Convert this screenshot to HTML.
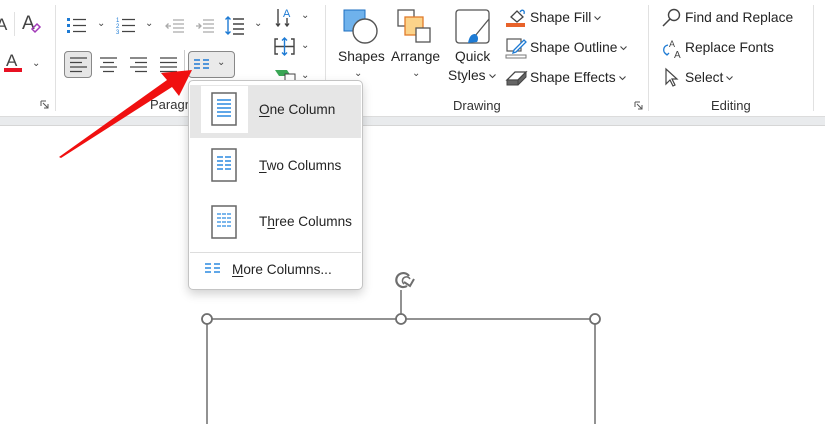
<!DOCTYPE html>
<html><head><meta charset="utf-8">
<style>
*{margin:0;padding:0;box-sizing:border-box}
body{width:825px;height:424px;overflow:hidden;background:#fff;position:relative;font-family:"Liberation Sans",sans-serif;color:#242424;font-size:14px}
.a{position:absolute;white-space:nowrap}
.sep{position:absolute;width:1px;background:#e1e1e1}
.lbl{position:absolute;font-size:13px;color:#333}
.chev{position:absolute;font-size:10px;color:#444}
svg{position:absolute;overflow:visible}
svg.cv{position:static;display:inline-block;vertical-align:middle;margin-left:3px}
.u{text-decoration:underline;text-underline-offset:2px}
.dd{font-size:13.6px}
</style></head><body>

<!-- ribbon -->
<div class="sep" style="left:55px;top:5px;height:106px"></div>
<div class="sep" style="left:325px;top:5px;height:106px"></div>
<div class="sep" style="left:648px;top:5px;height:106px"></div>
<div class="sep" style="left:813px;top:5px;height:106px"></div>
<div class="sep" style="left:14px;top:12px;height:24px"></div>

<!-- left partial -->
<div class="a" style="left:-4px;top:15px;font-size:17px;color:#444">A</div>
<div class="a" style="left:22px;top:13px;font-size:19px;color:#444">A</div>
<svg style="left:30px;top:22px" width="12" height="12"><path d="M2 7 L7 2 L10 5 L5 10Z" fill="none" stroke="#a23ab8" stroke-width="1.5"/></svg>
<div class="a" style="left:6px;top:51px;font-size:17px;color:#444">A</div>
<div class="a" style="left:4px;top:68px;width:18px;height:4px;background:#e81123"></div>
<div class="chev" style="left:32px;top:58px">⌄</div>
<svg style="left:40px;top:100px" width="10" height="10"><path d="M1 1H6M1 1V6M3 3L8 8M8 4V8H4" fill="none" stroke="#555"/></svg>

<!-- paragraph row1 -->
<svg style="left:67px;top:17px" width="20" height="18"><g fill="#1e7bd4"><rect x="0" y="1" width="3" height="3"/><rect x="0" y="7" width="3" height="3"/><rect x="0" y="13" width="3" height="3"/></g><g stroke="#444" stroke-width="1.3"><path d="M6 2.5H19M6 8.5H19M6 14.5H19"/></g></svg>
<div class="chev" style="left:97px;top:18px">⌄</div>
<svg style="left:116px;top:17px" width="20" height="18"><g fill="#1e7bd4" font-size="6" font-family="Liberation Sans"><text x="0" y="5">1</text><text x="0" y="11">2</text><text x="0" y="17">3</text></g><g stroke="#444" stroke-width="1.3"><path d="M6 2.5H19M6 8.5H19M6 14.5H19"/></g></svg>
<div class="chev" style="left:145px;top:18px">⌄</div>
<svg style="left:165px;top:18px" width="20" height="16"><g stroke="#aaa" stroke-width="1.3" fill="none"><path d="M8 2H19M8 6H19M8 10H19M8 14H19M6 8H1M3.5 5.5L1 8L3.5 10.5"/></g></svg>
<svg style="left:195px;top:18px" width="20" height="16"><g stroke="#aaa" stroke-width="1.3" fill="none"><path d="M8 2H19M8 6H19M8 10H19M8 14H19M1 8H6M3.5 5.5L6 8L3.5 10.5"/></g></svg>
<svg style="left:225px;top:15px" width="20" height="22"><g stroke="#1e7bd4" stroke-width="1.4" fill="none"><path d="M3 2V19M0.5 4.5L3 2L5.5 4.5M0.5 16.5L3 19L5.5 16.5"/></g><g stroke="#444" stroke-width="1.4"><path d="M8 4H19M8 9H19M8 14H19M8 19H19"/></g></svg>
<div class="chev" style="left:254px;top:18px">⌄</div>

<!-- row2 -->
<div class="a" style="left:64px;top:51px;width:28px;height:27px;border:1px solid #888;border-radius:4px;background:#e6e6e6"></div>
<svg style="left:70px;top:57px" width="18" height="16"><g stroke="#444" stroke-width="1.3"><path d="M0 1H17M0 5.5H12M0 10H17M0 14.5H12"/></g></svg>
<svg style="left:100px;top:57px" width="18" height="16"><g stroke="#444" stroke-width="1.3"><path d="M0 1H17M3 5.5H14M0 10H17M3 14.5H14"/></g></svg>
<svg style="left:130px;top:57px" width="18" height="16"><g stroke="#444" stroke-width="1.3"><path d="M0 1H17M5 5.5H17M0 10H17M5 14.5H17"/></g></svg>
<svg style="left:160px;top:57px" width="18" height="16"><g stroke="#444" stroke-width="1.3"><path d="M0 1H17M0 5.5H17M0 10H17M0 14.5H17"/></g></svg>
<div class="sep" style="left:184px;top:50px;height:28px;background:#ccc"></div>
<div class="a" style="left:188px;top:51px;width:47px;height:27px;border:1px solid #888;border-radius:4px;background:#eaeaea"></div>
<svg style="left:194px;top:59px" width="16" height="10"><g stroke="#1e7bd4" stroke-width="1.5"><path d="M0 1H6M9 1H15M0 5H6M9 5H15M0 9H6M9 9H15"/></g></svg>
<div class="chev" style="left:217px;top:57px">⌄</div>
<div class="lbl" style="left:150px;top:97px">Paragraph</div>

<!-- col 275 -->
<svg style="left:275px;top:7px" width="22" height="22"><g stroke="#444" stroke-width="1.4" fill="none"><path d="M3 2V19M1 16.5L3 19L5 16.5M12 11V19M10 16.5L12 19L14 16.5"/></g><text x="8" y="10" fill="#1e7bd4" font-size="11" font-family="Liberation Sans">A</text></svg>
<div class="chev" style="left:301px;top:10px">⌄</div>
<svg style="left:274px;top:37px" width="22" height="20"><g stroke="#444" stroke-width="1.4" fill="none"><path d="M4 2H1V17H4M17 2H20V17H17M1 9.5H20"/></g><g stroke="#1e7bd4" stroke-width="1.4" fill="none"><path d="M10.5 1V18M8 3.5L10.5 1L13 3.5M8 15.5L10.5 18L13 15.5"/></g></svg>
<div class="chev" style="left:301px;top:40px">⌄</div>
<svg style="left:275px;top:68px" width="22" height="12"><path d="M0 2H12L16 8H4Z" fill="#3aa655"/><rect x="10" y="6" width="10" height="8" fill="#fff" stroke="#444"/></svg>
<div class="chev" style="left:301px;top:70px">⌄</div>

<!-- drawing -->
<svg style="left:343px;top:9px" width="36" height="36"><rect x="1" y="1" width="21" height="21" fill="#6fb2ec" stroke="#1e6fc0"/><circle cx="22" cy="22" r="12" fill="#fff" stroke="#555" stroke-width="1.4"/></svg>
<div class="a" style="left:338px;top:49px;font-size:13.8px">Shapes</div>
<div class="chev" style="left:354px;top:68px">⌄</div>
<svg style="left:397px;top:9px" width="36" height="36"><rect x="1" y="1" width="16" height="16" fill="#fff" stroke="#555" stroke-width="1.3"/><rect x="8" y="8" width="18" height="18" fill="#fbd38a" stroke="#e07b2b" stroke-width="1.3"/><rect x="19" y="19" width="14" height="14" fill="#fff" stroke="#555" stroke-width="1.3"/></svg>
<div class="a" style="left:391px;top:49px;font-size:13.8px">Arrange</div>
<div class="chev" style="left:412px;top:68px">⌄</div>
<svg style="left:455px;top:9px" width="36" height="36"><rect x="1" y="1" width="33" height="33" rx="3" fill="#fff" stroke="#555" stroke-width="1.3"/><path d="M34 10L20 27" stroke="#555" stroke-width="1.3"/><path d="M20 25C15 25 14 30 13 34L22 33C24 30 23 26 20 25Z" fill="#1e7bd4"/></svg>
<div class="a" style="left:455px;top:49px;font-size:13.8px">Quick</div>
<div class="a" style="left:448px;top:68px;font-size:13.8px">Styles<svg class="cv" width="7" height="5"><path d="M0.5 0.5L3.5 3.5L6.5 0.5" fill="none" stroke="#444" stroke-width="1.1"/></svg></div>
<div class="lbl" style="left:453px;top:98px">Drawing</div>
<svg style="left:634px;top:101px" width="10" height="10"><path d="M1 1H6M1 1V6M3 3L8 8M8 4V8H4" fill="none" stroke="#555"/></svg>

<svg style="left:506px;top:8px" width="22" height="20"><path d="M5 9L11 3L17 9L11 14Z" fill="#fff" stroke="#444" stroke-width="1.3"/><path d="M14 4C16 1 19 2 18 6" fill="none" stroke="#1e7bd4" stroke-width="1.3"/><rect x="0" y="15" width="19" height="4" fill="#e8622a"/></svg>
<div class="a" style="left:530px;top:10px;font-size:13.8px">Shape Fill<svg class="cv" width="7" height="5"><path d="M0.5 0.5L3.5 3.5L6.5 0.5" fill="none" stroke="#444" stroke-width="1.1"/></svg></div>
<svg style="left:506px;top:37px" width="22" height="22"><rect x="1" y="2" width="14" height="12" fill="none" stroke="#555" stroke-width="1.2"/><path d="M8 13L18 3L20 5L10 15L7 16Z" fill="#fff" stroke="#1e7bd4" stroke-width="1.3"/><rect x="0" y="18" width="20" height="3" fill="none" stroke="#777"/></svg>
<div class="a" style="left:530px;top:40px;font-size:13.8px">Shape Outline<svg class="cv" width="7" height="5"><path d="M0.5 0.5L3.5 3.5L6.5 0.5" fill="none" stroke="#444" stroke-width="1.1"/></svg></div>
<svg style="left:506px;top:70px" width="22" height="16"><path d="M1 10L9 2H20L12 10Z" fill="#fff" stroke="#444" stroke-width="1.3"/><path d="M1 10H12V15H1Z M12 10L20 2V7L12 15" fill="#666" stroke="#444"/></svg>
<div class="a" style="left:530px;top:70px;font-size:13.8px">Shape Effects<svg class="cv" width="7" height="5"><path d="M0.5 0.5L3.5 3.5L6.5 0.5" fill="none" stroke="#444" stroke-width="1.1"/></svg></div>

<!-- editing -->
<svg style="left:662px;top:8px" width="20" height="20"><circle cx="12" cy="7" r="5.5" fill="none" stroke="#444" stroke-width="1.4"/><path d="M8 11L1 18" stroke="#444" stroke-width="1.5"/></svg>
<div class="a" style="left:685px;top:10px;font-size:13.8px">Find and Replace</div>
<svg style="left:661px;top:38px" width="22" height="22"><text x="8" y="9" font-size="9" fill="#444" font-family="Liberation Sans">A</text><text x="13" y="20" font-size="10" fill="#444" font-family="Liberation Sans">A</text><path d="M7 7C2 8 1 14 6 17M4 15L6 17L8 15" fill="none" stroke="#1e7bd4" stroke-width="1.3"/></svg>
<div class="a" style="left:685px;top:40px;font-size:13.8px">Replace Fonts</div>
<svg style="left:664px;top:68px" width="16" height="20"><path d="M2 1V16L6 12L9 18L11 17L8 11H13Z" fill="#fff" stroke="#444" stroke-width="1.2"/></svg>
<div class="a" style="left:685px;top:70px;font-size:13.8px">Select<svg class="cv" width="7" height="5"><path d="M0.5 0.5L3.5 3.5L6.5 0.5" fill="none" stroke="#444" stroke-width="1.1"/></svg></div>
<div class="lbl" style="left:711px;top:98px">Editing</div>

<!-- gray band -->
<div class="a" style="left:0;top:116px;width:825px;height:9px;background:#e9ebed;border-top:1px solid #dcdcdc"></div>
<div class="a" style="left:0;top:125px;width:825px;height:1px;background:#d6d6d6"></div>

<!-- document shape -->
<svg style="left:0;top:0" width="825" height="424">
<g stroke="#6e6e6e" stroke-width="1.5" fill="none">
<path d="M207 319V424M595 319V424M207 319H595M401 319V290"/>
<path d="M407 286A7 7 0 1 1 409 276" stroke-width="2.2"/>
<path d="M410 279A4 4 0 1 0 404 284" stroke-width="1.5"/>
<path d="M404 282L410 286L414 279" stroke-width="2"/>
</g>
<g fill="#fff" stroke="#6e6e6e" stroke-width="1.8"><circle cx="207" cy="319" r="5"/><circle cx="401" cy="319" r="5"/><circle cx="595" cy="319" r="5"/></g>
</svg>

<!-- dropdown -->
<div class="a" style="left:188px;top:80px;width:175px;height:210px;background:#fff;border:1px solid #c4c4c4;border-radius:5px;box-shadow:0 4px 10px rgba(0,0,0,.18)"></div>
<div class="a" style="left:190px;top:85px;width:171px;height:53px;background:#e6e6e6"></div>
<div class="a" style="left:201px;top:86px;width:47px;height:47px;background:#fff"></div>
<svg style="left:211px;top:92px" width="26" height="34"><rect x="1" y="1" width="24" height="32" fill="#fff" stroke="#666" stroke-width="1.5"/><g stroke="#2b8ae0" stroke-width="1.4"><path d="M6 8H20M6 12H20M6 16H20M6 20H20M6 24H20"/></g></svg>
<div class="a dd" style="left:259px;top:102px"><span class="u">O</span>ne Column</div>
<svg style="left:211px;top:148px" width="26" height="34"><rect x="1" y="1" width="24" height="32" fill="#fff" stroke="#666" stroke-width="1.5"/><g stroke="#2b8ae0" stroke-width="1.4"><path d="M6 9H12M14 9H20M6 13H12M14 13H20M6 17H12M14 17H20M6 21H12M14 21H20"/></g></svg>
<div class="a dd" style="left:259px;top:158px"><span class="u">T</span>wo Columns</div>
<svg style="left:211px;top:205px" width="26" height="34"><rect x="1" y="1" width="24" height="32" fill="#fff" stroke="#666" stroke-width="1.5"/><g stroke="#2b8ae0" stroke-width="1.3"><path d="M6 9H10M11 9H15M16 9H20M6 13H10M11 13H15M16 13H20M6 17H10M11 17H15M16 17H20M6 21H10M11 21H15M16 21H20"/></g></svg>
<div class="a dd" style="left:259px;top:214px">T<span class="u">h</span>ree Columns</div>
<div class="a" style="left:190px;top:252px;width:171px;height:1px;background:#ddd"></div>
<svg style="left:205px;top:263px" width="16" height="10"><g stroke="#2b8ae0" stroke-width="1.4"><path d="M0 1H6M9 1H15M0 5H6M9 5H15M0 9H6M9 9H15"/></g></svg>
<div class="a dd" style="left:232px;top:262px"><span class="u">M</span>ore Columns...</div>

<!-- red arrow -->
<svg style="left:0;top:0" width="825" height="424">
<path d="M192 70L161 73L167 80L59 157L61 158L172 87L179 96Z" fill="#f01010"/>
</svg>
</body></html>
